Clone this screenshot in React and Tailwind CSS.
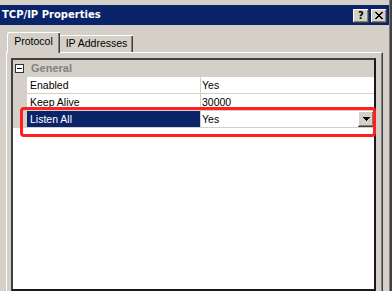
const raised =
  "shadow-[inset_-1px_-1px_0_#404040,inset_1px_1px_0_#ffffff,inset_-2px_-2px_0_#808080]";

function CloseGlyph() {
  return (
    <svg width="8" height="7" viewBox="0 0 8 7" shapeRendering="crispEdges">
      <path
        fill="#000"
        d="M0 0h2v1H0zM6 0h2v1H6zM1 1h2v1H1zM5 1h2v1H5zM2 2h4v1H2zM3 3h2v1H3zM2 4h4v1H2zM1 5h2v1H1zM5 5h2v1H5zM0 6h2v1H0zM6 6h2v1H6z"
      />
    </svg>
  );
}

function DownArrow() {
  return (
    <svg width="7" height="4" viewBox="0 0 7 4" shapeRendering="crispEdges">
      <path fill="#000" d="M0 0h7v1H0zM1 1h5v1H1zM2 2h3v1H2zM3 3h1v1H3z" />
    </svg>
  );
}

function PropRow({ name, value, selected }) {
  return (
    <div className="flex h-[17px] border-b border-[#d4d0c8]">
      <div className="w-[14px] bg-[#d4d0c8]" />
      <div
        className={
          "flex w-[173px] items-center pl-[3px] " +
          (selected ? "bg-[#0a246a] text-white" : "bg-white")
        }
      >
        {name}
      </div>
      <div className="w-px bg-[#d4d0c8]" />
      <div className="flex flex-1 items-center bg-white pl-[1px]">
        <span className="flex-1">{value}</span>
        {selected && (
          <div className={"flex h-full w-[16px] items-center justify-center bg-[#d4d0c8] " + raised}>
            <DownArrow />
          </div>
        )}
      </div>
    </div>
  );
}

export default function App() {
  return (
    <div className="relative flex h-[291px] w-[392px] overflow-hidden bg-[#d4d0c8] font-['Liberation_Sans',Arial,sans-serif] text-[10.5px] leading-none text-black">
      <div className="flex min-w-0 flex-1 flex-col pt-[5px]">
        {/* title bar */}
        <div className="flex h-[20px] items-center justify-between bg-[#0a246a] pl-[2px] pr-[2px]">
          <span className="font-['DejaVu_Sans',sans-serif] text-[10px] font-bold text-white">
            TCP/IP Properties
          </span>
          <div className="mt-[2px] flex gap-[2px]">
            <div className={"flex h-[14px] w-[16px] items-center justify-center bg-[#d4d0c8] pb-px font-['DejaVu_Sans',sans-serif] text-[10px] font-bold " + raised}>
              ?
            </div>
            <div className={"flex h-[14px] w-[16px] items-center justify-center bg-[#d4d0c8] pb-px " + raised}>
              <CloseGlyph />
            </div>
          </div>
        </div>

        {/* tabs */}
        <div className="ml-[6px] mt-[7px] flex h-[20px] items-end">
          <div className="relative z-10 -mb-px ml-px flex h-[21px] w-[53px] items-center justify-center bg-[#d4d0c8] pb-[2px] shadow-[inset_1px_1px_0_#ffffff,inset_-1px_0_0_#404040,inset_-2px_0_0_#808080] rounded-tl-[2px]">
            Protocol
          </div>
          <div className="flex h-[17px] w-[73px] items-center justify-center bg-[#d4d0c8] pb-px shadow-[inset_0_1px_0_#ffffff,inset_-1px_0_0_#404040,inset_-2px_0_0_#808080]">
            IP Addresses
          </div>
        </div>

        {/* tab page */}
        <div className="mx-[6px] flex flex-1 flex-col border-l border-t border-r border-l-white border-t-white border-r-[#404040] pl-[4px] pr-[6px] pt-[5px] shadow-[inset_-1px_0_0_#808080]">
          <div className="flex flex-1 flex-col border-2 border-l-[#404040] border-t-[#404040] border-r-[#1a1a1a] border-b-[#1a1a1a] bg-white">
            <div className="flex h-[17px] items-center bg-[#d4d0c8]">
              <div className="ml-[2px] flex h-[9px] w-[9px] items-center justify-center border border-[#303030] bg-white">
                <div className="h-px w-[5px] bg-black" />
              </div>
              <span className="ml-[7px] text-[11px] font-bold text-[#808080]">General</span>
            </div>
            <PropRow name="Enabled" value="Yes" />
            <PropRow name="Keep Alive" value="30000" />
            <PropRow name="Listen All" value="Yes" selected />
          </div>
        </div>
      </div>
      <div className="w-px bg-[#808080]" />
      <div className="w-[2px] bg-[#404040]" />

      {/* red highlight annotation */}
      <div className="absolute left-[20px] top-[107px] h-[30px] w-[356px] rounded-[4px] border-[3px] border-[#ff2020]" />
    </div>
  );
}
